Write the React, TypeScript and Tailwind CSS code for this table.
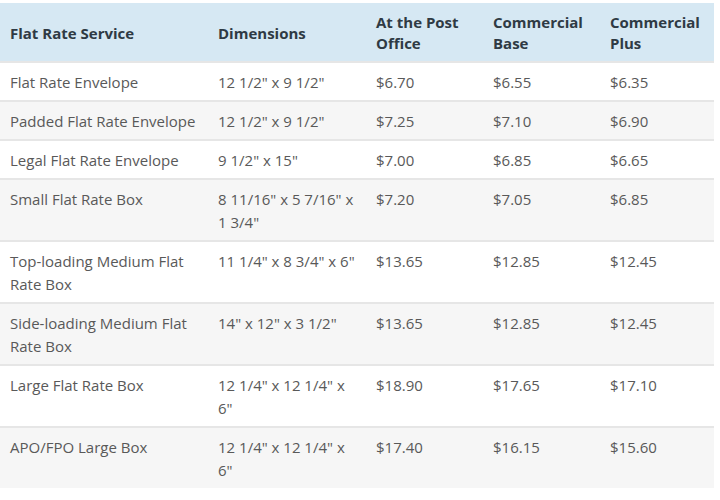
import React from 'react';

interface RateRow {
  service: string;
  dimensions: string;
  postOffice: string;
  commercialBase: string;
  commercialPlus: string;
}

const rates: RateRow[] = [
  { service: 'Flat Rate Envelope', dimensions: '12 1/2" x 9 1/2"', postOffice: '$6.70', commercialBase: '$6.55', commercialPlus: '$6.35' },
  { service: 'Padded Flat Rate Envelope', dimensions: '12 1/2" x 9 1/2"', postOffice: '$7.25', commercialBase: '$7.10', commercialPlus: '$6.90' },
  { service: 'Legal Flat Rate Envelope', dimensions: '9 1/2" x 15"', postOffice: '$7.00', commercialBase: '$6.85', commercialPlus: '$6.65' },
  { service: 'Small Flat Rate Box', dimensions: '8 11/16" x 5 7/16" x 1 3/4"', postOffice: '$7.20', commercialBase: '$7.05', commercialPlus: '$6.85' },
  { service: 'Top-loading Medium Flat Rate Box', dimensions: '11 1/4" x 8 3/4" x 6"', postOffice: '$13.65', commercialBase: '$12.85', commercialPlus: '$12.45' },
  { service: 'Side-loading Medium Flat Rate Box', dimensions: '14" x 12" x 3 1/2"', postOffice: '$13.65', commercialBase: '$12.85', commercialPlus: '$12.45' },
  { service: 'Large Flat Rate Box', dimensions: '12 1/4" x 12 1/4" x 6"', postOffice: '$18.90', commercialBase: '$17.65', commercialPlus: '$17.10' },
  { service: 'APO/FPO Large Box', dimensions: '12 1/4" x 12 1/4" x 6"', postOffice: '$17.40', commercialBase: '$16.15', commercialPlus: '$15.60' },
];

const FlatRateTable = () => {
  return (
    <div className="w-[720px] h-[500px] bg-white pt-[3px] font-['Open_Sans',sans-serif] text-[15px]">
      <table className="w-[714px] table-fixed border-collapse">
        <colgroup>
          <col className="w-[208px]" />
          <col className="w-[158px]" />
          <col className="w-[117px]" />
          <col className="w-[117px]" />
          <col className="w-[114px]" />
        </colgroup>
        <thead>
          <tr className="bg-[#d6e8f3] text-[#2f3a44] font-bold leading-[21px] text-left">
            <th className="h-[59px] pl-[10px] pr-[6px] pt-[2px] align-middle">Flat Rate Service</th>
            <th className="pl-[10px] pr-[7px] pt-[2px] align-middle">Dimensions</th>
            <th className="pl-[10px] pr-[8px] pt-[2px] align-middle">At the Post Office</th>
            <th className="pl-[10px] pr-[8px] pt-[2px] align-middle">Commercial Base</th>
            <th className="pl-[10px] pr-[4px] pt-[2px] align-middle">Commercial Plus</th>
          </tr>
        </thead>
        <tbody>
          {rates.map((row, i) => (
            <tr
              key={row.service}
              className={`border-t-2 border-[#e6e6e6] text-[#595959] leading-[23px] align-top ${
                i % 2 === 1 ? 'bg-[#f6f6f6]' : 'bg-white'
              }`}
            >
              <td className="pl-[10px] pr-[6px] pt-[8px] pb-[6px]">{row.service}</td>
              <td className="pl-[10px] pr-[7px] pt-[8px] pb-[6px]">{row.dimensions}</td>
              <td className="pl-[10px] pr-[8px] pt-[8px] pb-[6px]">{row.postOffice}</td>
              <td className="pl-[10px] pr-[8px] pt-[8px] pb-[6px]">{row.commercialBase}</td>
              <td className="pl-[10px] pr-[4px] pt-[8px] pb-[6px]">{row.commercialPlus}</td>
            </tr>
          ))}
        </tbody>
      </table>
    </div>
  );
};

export default FlatRateTable;
